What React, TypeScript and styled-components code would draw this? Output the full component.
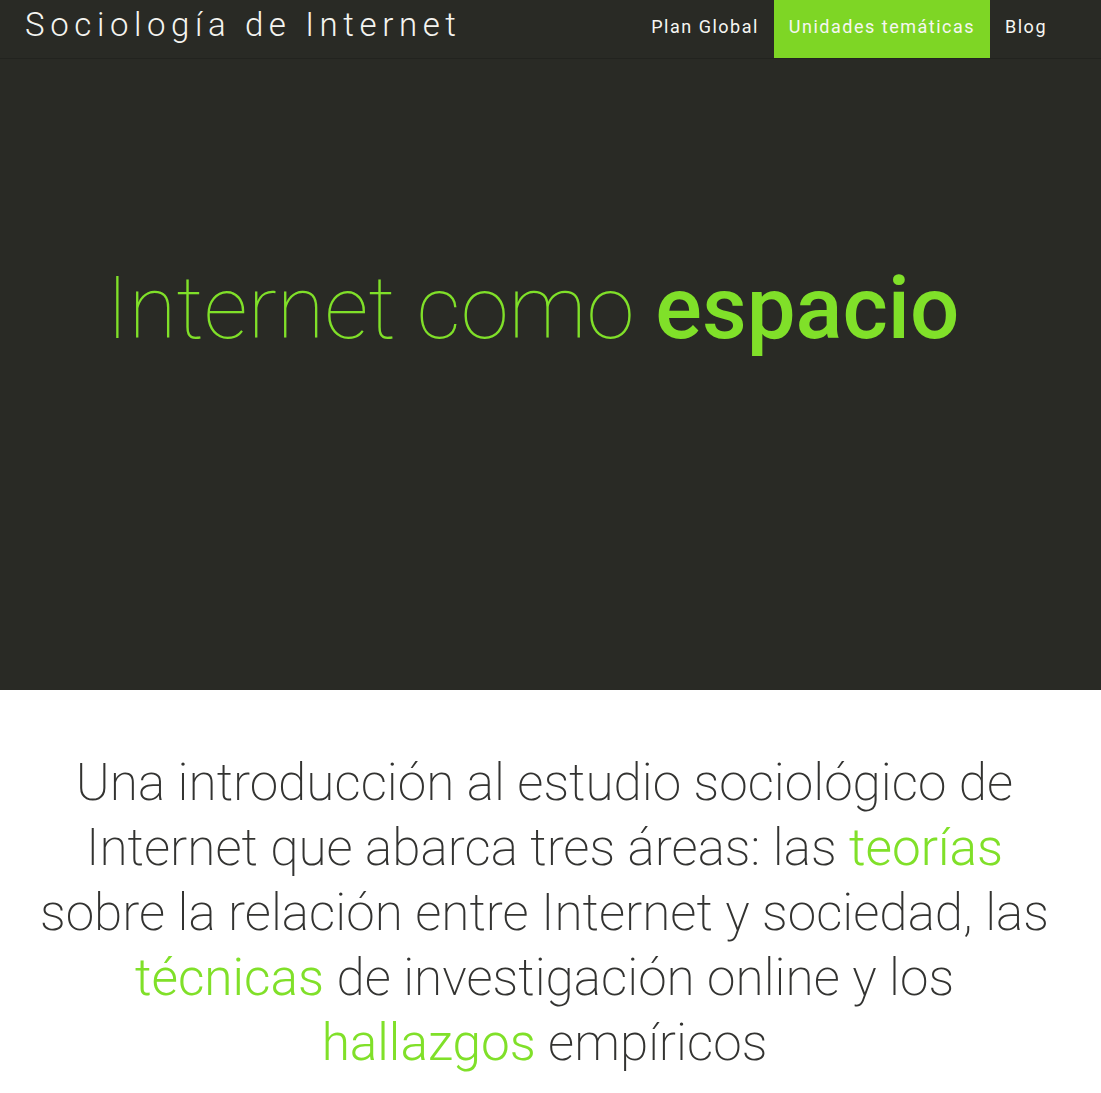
import React from "react";
import styled, { createGlobalStyle } from "styled-components";

const Global = createGlobalStyle`
  html, body { margin: 0; padding: 0; background: #ffffff; }
  body { font-family: Roboto, "Liberation Sans", sans-serif; }
  * { box-sizing: border-box; }
`;

const Header = styled.header`
  height: 59px;
  background: #292a25;
  border-bottom: 1px solid #22231f;
  display: flex;
  align-items: stretch;
  justify-content: space-between;
  padding: 0 39px 0 25px;
`;

const Brand = styled.div`
  display: flex;
  align-items: center;
  color: #f4f4f0;
  font-family: Roboto, sans-serif;
  font-weight: 300;
  font-size: 33px;
  letter-spacing: 5.6px;
  padding-bottom: 9px;
`;

const Nav = styled.nav`
  display: flex;
  align-items: stretch;
  height: 58px;
`;

const NavItem = styled.a<{ $active?: boolean }>`
  display: flex;
  align-items: center;
  padding: 0 15px 6px;
  font-family: Roboto, sans-serif;
  font-size: 18px;
  font-weight: 400;
  letter-spacing: 1.5px;
  color: #f6f6f2;
  text-decoration: none;
  background: ${(p) => (p.$active ? "#7ed625" : "transparent")};
`;

const Hero = styled.section`
  height: 631px;
  background: #292a25;
  display: flex;
  justify-content: flex-start;
  padding: 199px 0 0 106px;
`;

const HeroTitle = styled.h1`
  margin: 0;
  font-family: Roboto, sans-serif;
  font-weight: 100;
  font-size: 87px;
  line-height: 100px;
  color: #80e029;
  white-space: nowrap;
`;

const Strong = styled.strong`
  font-weight: 500;
`;

const Intro = styled.section`
  display: flex;
  justify-content: center;
  padding: 60px 32px 0 20px;
`;

const IntroText = styled.p`
  margin: 0;
  text-align: center;
  font-family: Roboto, sans-serif;
  font-weight: 200;
  font-size: 51.3px;
  line-height: 65px;
  color: #333331;
  white-space: nowrap;
`;

const Highlight = styled.span`
  color: #80e029;
  font-weight: 300;
`;

export default function App() {
  return (
    <>
      <Global />
      <Header>
        <Brand>Sociología de Internet</Brand>
        <Nav>
          <NavItem href="#">Plan Global</NavItem>
          <NavItem href="#" $active>
            Unidades temáticas
          </NavItem>
          <NavItem href="#">Blog</NavItem>
        </Nav>
      </Header>
      <Hero>
        <HeroTitle>
          Internet como <Strong>espacio</Strong>
        </HeroTitle>
      </Hero>
      <Intro>
        <IntroText>
          Una introducción al estudio sociológico de
          <br />
          Internet que abarca tres áreas: las <Highlight>teorías</Highlight>
          <br />
          sobre la relación entre Internet y sociedad, las
          <br />
          <Highlight>técnicas</Highlight> de investigación online y los
          <br />
          <Highlight>hallazgos</Highlight> empíricos
        </IntroText>
      </Intro>
    </>
  );
}
